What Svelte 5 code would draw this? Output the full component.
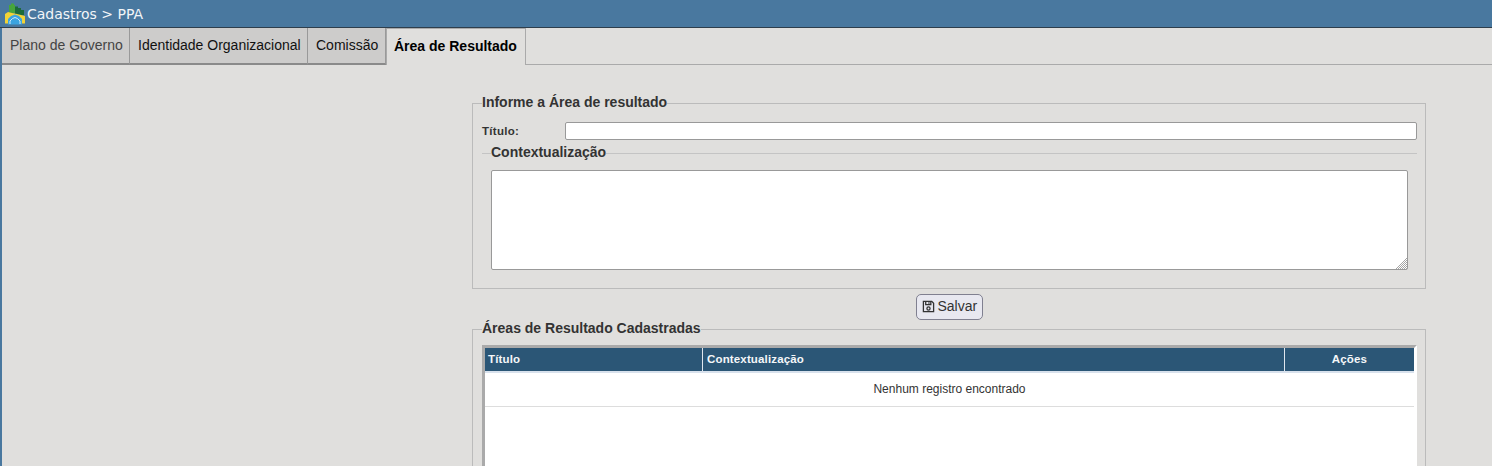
<script>
	const tabs = [
		{ label: 'Plano de Governo', width: 128, muted: true },
		{ label: 'Identidade Organizacional', width: 178 },
		{ label: 'Comissão', width: 78 },
		{ label: 'Área de Resultado', width: 140, active: true }
	];
</script>

<div class="page">
	<header class="topbar">
		<svg class="logo" width="22" height="22" viewBox="0 0 22 22">
			<path d="M5 10V2h2V0.500h3V2h1v8z" fill="#47a53c" />
			<path d="M11 3.500h3v1.500h3v2h3v5h-9z" fill="#1c6b3a" />
			<path d="M1 20.500V11l3-2 4 1 5 1 4 1 4 1v7.500z" fill="#f2d335" />
			<path d="M4 21.500V16l3-3 4-1.500 4 1.500 3 3v5.500z" fill="#3ba4e0" />
			<path d="M6 21v-3l2.500-2.500 2.500-1 2.500 1 2.500 2.500v3" fill="none" stroke="#cfe9f7" stroke-width="1" />
		</svg>
		<span>Cadastros &gt; PPA</span>
	</header>

	<main class="main">
		<nav class="tabs">
			{#each tabs as tab}
				<div class="tab" class:active={tab.active} class:muted={tab.muted} style="width: {tab.width}px">
					{tab.label}
				</div>
			{/each}
		</nav>

		<div class="content">
			<div class="column">
				<fieldset class="box first">
					<legend>Informe a Área de resultado</legend>
					<div class="row">
						<label for="titulo">Título:</label>
						<input id="titulo" type="text" />
					</div>
					<fieldset class="inner">
						<legend>Contextualização</legend>
						<div class="area-wrap">
							<textarea aria-label="Contextualização"></textarea>
							<svg class="grip" width="11" height="11" viewBox="0 0 11 11" stroke="#a5a5a5" stroke-width="1">
								<path d="M0 11L11 0M2 11l9-9M4 11l7-7M6 11l5-5M8 11l3-3M10 11l1-1" />
							</svg>
						</div>
					</fieldset>
				</fieldset>

				<div class="actions">
					<button type="button">
						<svg width="13" height="13" viewBox="0 0 14 14" fill="none" stroke="#333" stroke-width="1.4">
							<path d="M1.500 1.500h9l2 2v9h-11z" />
							<path d="M4 1.500v3.500h5.500v-3.500M7.500 2.500v1.500" />
							<circle cx="7" cy="9.200" r="1.700" />
						</svg>
						Salvar
					</button>
				</div>

				<fieldset class="box second">
					<legend>Áreas de Resultado Cadastradas</legend>
					<div class="grid-wrap">
						<table>
							<thead>
								<tr>
									<th class="col-title">Título</th>
									<th class="col-text">Contextualização</th>
									<th class="col-actions">Ações</th>
								</tr>
							</thead>
							<tbody>
								<tr>
									<td colspan="3">Nenhum registro encontrado</td>
								</tr>
							</tbody>
						</table>
					</div>
				</fieldset>
			</div>
		</div>
	</main>
</div>

<style>
	:global(body) {
		margin: 0;
		background: #e0dfdd;
	}

	.page {
		height: 466px;
		overflow: hidden;
		font-family: 'Liberation Sans', Arial, sans-serif;
		background: #e0dfdd;
		color: #333;
	}

	.topbar {
		height: 27px;
		box-sizing: content-box;
		display: flex;
		align-items: center;
		gap: 1px;
		padding-left: 4px;
		background: #49789f;
		border-bottom: 1px solid #2e3e4c;
		color: #f2f5f8;
		font-family: 'DejaVu Sans', Verdana, sans-serif;
		font-size: 14px;
	}

	.logo {
		flex: none;
	}

	.main {
		border-left: 2px solid #49789f;
		height: 438px;
	}

	.tabs {
		display: flex;
		height: 37px;
		box-sizing: border-box;
		border-bottom: 1px solid #aaa;
	}

	.tab {
		box-sizing: border-box;
		height: 37px;
		padding-left: 8px;
		line-height: 34px;
		font-size: 14px;
		color: #111;
		background: #cdcccb;
		border-right: 1px solid #999;
		border-bottom: 2px solid #8a8a8a;
		white-space: nowrap;
	}

	.tab.muted {
		color: #444;
	}

	.tab.active {
		background: #e0dfdd;
		color: #000;
		font-weight: bold;
		padding-left: 7px;
		border: 1px solid #aaa;
		border-bottom: 0;
		line-height: 35px;
	}

	.content {
		display: flex;
		justify-content: flex-end;
		padding: 30px 66px 0 0;
	}

	.column {
		width: 954px;
	}

	fieldset {
		margin: 0;
		min-width: 0;
		box-sizing: border-box;
	}

	.box {
		border: 1px solid #bbb;
		padding: 0 8px 0 9px;
	}

	legend {
		padding: 0 0 2px;
		font-size: 14px;
		font-weight: bold;
		color: #333;
		line-height: 14px;
	}

	.first {
		height: 194px;
	}

	.row {
		display: flex;
		align-items: center;
		height: 18px;
		margin-top: 11px;
	}

	label {
		width: 83px;
		font-size: 11.5px;
		font-weight: bold;
		letter-spacing: 0.3px;
	}

	input {
		flex: 1;
		min-width: 0;
		box-sizing: border-box;
		height: 18px;
		margin: 0;
		padding: 0 3px;
		background: #fff;
		border: 1px solid #999;
		border-radius: 2px;
	}

	.inner {
		border: 0;
		border-top: 1px solid #c4c4c4;
		padding: 9px 9px 0 9px;
		margin-top: 5px;
	}

	.area-wrap {
		position: relative;
		width: 917px;
		height: 100px;
	}

	textarea {
		display: block;
		box-sizing: border-box;
		width: 917px;
		height: 100px;
		margin: 0;
		resize: none;
		background: #fff;
		border: 1px solid #999;
		border-radius: 2px;
	}

	.grip {
		position: absolute;
		right: 1px;
		bottom: 1px;
	}

	.actions {
		display: flex;
		justify-content: center;
		padding-top: 5px;
		height: 26px;
	}

	button {
		display: flex;
		align-items: center;
		gap: 3px;
		box-sizing: border-box;
		width: 67px;
		height: 26px;
		margin: 0;
		padding: 0 0 2px 5px;
		background: #e8e8f0;
		border: 1px solid #808090;
		border-radius: 5px;
		color: #333;
		font-family: inherit;
		font-size: 14px;
	}

	.second {
		margin-top: 1px;
		height: 200px;
	}

	.grid-wrap {
		margin-top: 8px;
		height: 140px;
		border-top: 3px solid #aaa;
		border-left: 3px solid #aaa;
		border-right: 3px solid #fff;
		background: #fff;
	}

	table {
		width: 100%;
		border-collapse: collapse;
		table-layout: fixed;
		font-size: 11.5px;
	}

	th {
		height: 22px;
		padding: 0 3px 1px;
		background: #2b5676;
		color: #f5f7f9;
		font-weight: bold;
		text-align: left;
		border-right: 1px solid #dfe6ee;
		border-bottom: 2px solid #d8e1ec;
		letter-spacing: 0.15px;
	}

	th:last-child {
		border-right: 0;
	}

	.col-title {
		width: 211px;
	}

	.col-text {
		padding-left: 4px;
	}

	.col-actions {
		width: 123px;
		text-align: center;
	}

	td {
		height: 31px;
		padding: 0 0 2px;
		text-align: center;
		font-size: 12px;
		color: #333;
		background: #fff;
		border-bottom: 1px solid #ddd;
	}
</style>
